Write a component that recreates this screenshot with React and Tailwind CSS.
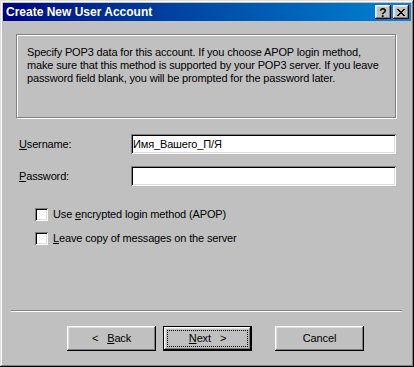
import React from "react";

function Check({ children }) {
  return (
    <div className="flex items-center h-[13px] ml-[32px]">
      <div className="w-[13px] h-[13px] bg-white shadow-[inset_1px_1px_0_#808080,inset_-1px_-1px_0_#fff,inset_2px_2px_0_#000,inset_-2px_-2px_0_#dfdfdf]" />
      <span className="ml-[5px] leading-[13px]">{children}</span>
    </div>
  );
}

function Field({ label, value }) {
  return (
    <div className="flex items-center h-[20px] ml-[16px]">
      <div className="w-[112px] leading-[13px]">{label}</div>
      <div className="w-[265px] h-[20px] bg-white flex items-center pl-[2px] leading-[13px] shadow-[inset_1px_1px_0_#808080,inset_-1px_-1px_0_#fff,inset_2px_2px_0_#000,inset_-2px_-2px_0_#dfdfdf]">
        {value}
      </div>
    </div>
  );
}

const bevel =
  "shadow-[inset_-1px_-1px_0_#000,inset_1px_1px_0_#fff,inset_-2px_-2px_0_#808080,inset_2px_2px_0_#dfdfdf]";

export default function App() {
  return (
    <div className="w-[414px] h-[367px] bg-[#c0c0c0] p-[3px] text-[11px] text-black font-['Liberation_Sans',Arial,sans-serif] shadow-[inset_-1px_-1px_0_#000,inset_1px_1px_0_#dfdfdf,inset_-2px_-2px_0_#808080,inset_2px_2px_0_#fff]">
      {/* Title bar */}
      <div className="h-[18px] flex items-center justify-between pl-[3px] pr-[2px] bg-gradient-to-r from-[#000080] to-[#1084d0]">
        <span className="text-white font-bold text-[12px] leading-[14px]">Create New User Account</span>
        <div className="flex gap-[2px]">
          <div className={`w-[16px] h-[14px] bg-[#c0c0c0] flex items-center justify-center ${bevel}`}>
            <span className="font-bold text-[12px] leading-[12px] mt-[1px]">?</span>
          </div>
          <div className={`w-[16px] h-[14px] bg-[#c0c0c0] flex items-center justify-center ${bevel}`}>
            <svg width="8" height="7" viewBox="0 0 8 7" shapeRendering="crispEdges">
              <rect x="0" y="0" width="2" height="1" fill="#000" />
              <rect x="6" y="0" width="2" height="1" fill="#000" />
              <rect x="1" y="1" width="2" height="1" fill="#000" />
              <rect x="5" y="1" width="2" height="1" fill="#000" />
              <rect x="2" y="2" width="4" height="1" fill="#000" />
              <rect x="3" y="3" width="2" height="1" fill="#000" />
              <rect x="2" y="4" width="4" height="1" fill="#000" />
              <rect x="1" y="5" width="2" height="1" fill="#000" />
              <rect x="5" y="5" width="2" height="1" fill="#000" />
              <rect x="0" y="6" width="2" height="1" fill="#000" />
              <rect x="6" y="6" width="2" height="1" fill="#000" />
            </svg>
          </div>
        </div>
      </div>

      <div className="tracking-[-0.15px]">
        {/* Info box */}
        <div className="mt-[13px] ml-[13px] w-[380px] h-[84px] border border-[#808080] shadow-[inset_1px_1px_0_#fff,1px_1px_0_#fff] pt-[11px] pl-[10px] leading-[13px]">
          <div>Specify POP3 data for this account. If you choose APOP login method,</div>
          <div>make sure that this method is supported by your POP3 server. If you leave</div>
          <div>password field blank, you will be prompted for the password later.</div>
        </div>

        {/* Fields */}
        <div className="mt-[16px]">
          <Field
            label={
              <>
                <span className="underline underline-offset-[1px]">U</span>sername:
              </>
            }
            value="Имя_Вашего_П/Я"
          />
        </div>
        <div className="mt-[12px]">
          <Field
            label={
              <>
                <span className="underline underline-offset-[1px]">P</span>assword:
              </>
            }
            value=""
          />
        </div>

        {/* Checkboxes */}
        <div className="mt-[22px]">
          <Check>
            Use <span className="underline underline-offset-[1px]">e</span>ncrypted login method (APOP)
          </Check>
        </div>
        <div className="mt-[11px]">
          <Check>
            <span className="underline underline-offset-[1px]">L</span>eave copy of messages on the server
          </Check>
        </div>

        {/* Separator */}
        <div className="mt-[65px] ml-[8px] w-[391px] h-[2px] border-t border-t-[#808080] border-b border-b-white" />

        {/* Buttons */}
        <div className="mt-[14px] ml-[64px] flex">
          <div className={`w-[89px] h-[25px] flex items-center justify-center gap-[9px] leading-[13px] ${bevel}`}>
            <span>&lt;</span>
            <span>
              <span className="underline underline-offset-[1px]">B</span>ack
            </span>
          </div>
          <div className="ml-[7px] w-[89px] h-[25px] border border-black">
            <div className={`w-full h-full p-[3px] ${bevel}`}>
              <div className="w-full h-full border border-dotted border-black flex items-center justify-center gap-[9px] leading-[13px]">
                <span>
                  <span className="underline underline-offset-[1px]">N</span>ext
                </span>
                <span>&gt;</span>
              </div>
            </div>
          </div>
          <div className={`ml-[23px] w-[89px] h-[25px] flex items-center justify-center leading-[13px] ${bevel}`}>
            Cancel
          </div>
        </div>
      </div>
    </div>
  );
}
